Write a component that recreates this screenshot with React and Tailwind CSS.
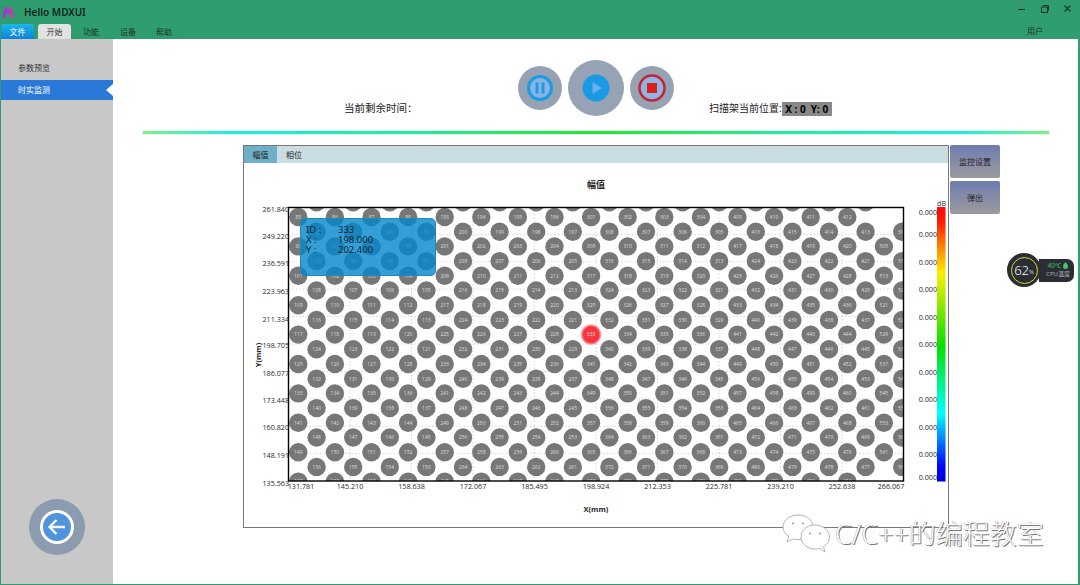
import React from "react";

const cjk = "font-['Noto_Sans','Noto_Sans_CJK_SC',sans-serif]";

function buildCircles() {
  const out = [];
  for (let k = -1; k <= 18; k++) {
    const odd = ((k % 2) + 2) % 2 === 1;
    const cy = 217 + 14.7 * k;
    const x0 = odd ? 316.6 : 298.3;
    const show = k <= 0 || k === 18 ? 16 : 17;
    for (let i = 0; i < show; i++) {
      const block = Math.floor(i / 4);
      const pos = i % 4;
      const starts = [101, 209, 317, 425];
      let n;
      if (block < 4) {
        const base = starts[block] + 4 * (k - 4);
        n = odd ? base + 3 - pos : base + pos;
      } else {
        const base = 505 + 4 * (k - 2);
        n = odd ? base + 3 : base;
      }
      const cx = x0 + 36.6 * i;
      out.push({ cx, cy, n });
    }
  }
  return out;
}

const yTicks = [
  ["261.840", 209], ["249.220", 236], ["236.591", 263.5], ["223.963", 291], ["211.334", 319],
  ["198.705", 345.5], ["186.077", 373], ["173.448", 400], ["160.820", 427], ["148.191", 455], ["135.563", 483],
];
const xTicks = [
  ["131.781", 301], ["145.210", 350], ["158.638", 411.5], ["172.067", 473], ["185.495", 534.5], ["198.924", 596],
  ["212.353", 657.5], ["225.781", 719], ["239.210", 780.5], ["252.638", 842], ["266.067", 891],
];
const cTicks = [212, 234, 262, 289, 317, 344, 372, 399, 427, 454, 477];

function Chart() {
  const circles = buildCircles();
  return (
    <svg width="704" height="364" viewBox="244 163 704 364" className="block" style={{ fontFamily: "'Open Sans','Noto Sans CJK SC',sans-serif" }}>
      <defs>
        <clipPath id="plot"><rect x="288.5" y="207" width="615" height="274" /></clipPath>
        <linearGradient id="cbar" x1="0" y1="0" x2="0" y2="1">
          <stop offset="0" stopColor="#ff0a0a" />
          <stop offset="0.05" stopColor="#ff1a00" />
          <stop offset="0.24" stopColor="#ffee00" />
          <stop offset="0.51" stopColor="#00e000" />
          <stop offset="0.75" stopColor="#00ffff" />
          <stop offset="0.95" stopColor="#0000ff" />
          <stop offset="1" stopColor="#0000c8" />
        </linearGradient>
        <radialGradient id="hot">
          <stop offset="0" stopColor="#f9404a" />
          <stop offset="0.72" stopColor="#f7303c" />
          <stop offset="1" stopColor="#f7303c" stopOpacity="0.25" />
        </radialGradient>
      </defs>
      <text x="596" y="188" textAnchor="middle" fontSize="9" fontWeight="700" fill="#222">幅值</text>
      <g clipPath="url(#plot)">
        {[234.4, 261.8, 289.2, 316.6, 344, 371.4, 398.8, 426.2, 453.6].map((y) => (
          <line key={y} x1="288.5" x2="903.5" y1={y} y2={y} stroke="#b8b8b8" strokeWidth="0.6" strokeDasharray="1.5 2" />
        ))}
        {[350, 411.5, 473, 534.5, 596, 657.5, 719, 780.5, 842].map((x) => (
          <line key={x} x1={x} x2={x} y1="207" y2="481" stroke="#b8b8b8" strokeWidth="0.6" strokeDasharray="1.5 2" />
        ))}
        {circles.map((c) => (
          <g key={c.cx + "-" + c.cy}>
            <circle cx={c.cx} cy={c.cy} r={c.n === 333 ? 10.5 : 9.2} fill={c.n === 333 ? "url(#hot)" : "#777777"} />
            <text x={c.cx} y={c.cy + 1.8} textAnchor="middle" fontSize="5" fill="#dddddd">{c.n}</text>
          </g>
        ))}
      </g>
      <rect x="288.5" y="207.5" width="615" height="273.5" fill="none" stroke="#000" strokeWidth="1.4" />
      {yTicks.map(([t, y]) => (
        <text key={t} x="289" y={y + 2.5} textAnchor="end" fontSize="7.2" fill="#2a2a2a">{t}</text>
      ))}
      {xTicks.map(([t, x]) => (
        <text key={t} x={x} y="489" textAnchor="middle" fontSize="7.2" fill="#2a2a2a">{t}</text>
      ))}
      <text x="596" y="512" textAnchor="middle" fontSize="7.5" fontWeight="700" fill="#222">X(mm)</text>
      <text transform="translate(260.5 355) rotate(-90)" textAnchor="middle" fontSize="7.5" fontWeight="700" fill="#222">Y(mm)</text>
      <rect x="937" y="207" width="8.5" height="274.5" fill="url(#cbar)" />
      <text x="941.5" y="205.5" textAnchor="middle" fontSize="7" fill="#2a2a2a">dB</text>
      {cTicks.map((y) => (
        <text key={y} x="937" y={y + 2.5} textAnchor="end" fontSize="7.2" fill="#2a2a2a">0.000</text>
      ))}
    </svg>
  );
}

function RoundBtn({ big, children }) {
  return (
    <div className={`${big ? "w-[56px] h-[56px]" : "w-[44px] h-[44px]"} rounded-full bg-[#96a3b5] flex items-center justify-center`}>
      {children}
    </div>
  );
}

function Wechat() {
  return (
    <svg width="50" height="42" viewBox="0 0 50 42" fill="#fff" stroke="#aaaaaa" strokeWidth="0.9">
      <path d="M16 2C7.5 2 1 7.5 1 14c0 4 2.4 7.3 5.8 9.5L5 29l6-3c1.7.4 3.2.6 5 .6 9 0 15-6 15-12.6C31 7.5 24.5 2 16 2z" />
      <path d="M33 12c-8 0-14 5.500-14 12s6 12 14 12c1.500 0 3-.2 4.500-.6L43 39l-1.500-5.500C45 31.500 47.500 28 47.500 24 47.500 17.500 41 12 33 12z" />
      <circle cx="11" cy="10.500" r="1" fill="#999" stroke="none" />
      <circle cx="21" cy="10.500" r="1" fill="#999" stroke="none" />
      <circle cx="28" cy="20.500" r="1" fill="#999" stroke="none" />
      <circle cx="38" cy="20.500" r="1" fill="#999" stroke="none" />
    </svg>
  );
}

export default function App() {
  return (
    <div className={`relative w-[1080px] h-[585px] flex flex-col overflow-hidden bg-[#2f9d70] px-[1px] pb-[1px] ${cjk}`}>
      {/* title bar */}
      <header className="h-[24px] flex items-center shrink-0">
        <svg width="12" height="14" viewBox="0 0 12 14" className="ml-[1px]">
          <path d="M1 13 L2 2 L4 2 L6 6 L8 2 L10 2 L11 13 L8.500 13 L8 7 L6 10 L4 7 L3.500 13 Z" fill="#a532d8" />
          <path d="M8 2 L10 2 L11 13 L8.500 13 Z" fill="#d835a8" />
        </svg>
        <span className="ml-[10px] text-[10px] font-semibold text-[#10251c]">Hello MDXUI</span>
        <div className="ml-auto mb-[6px] flex items-center gap-[13px] pr-[6px] text-[#14392b]">
          <svg width="10" height="10" viewBox="0 0 10 10"><path d="M1 5.500h7" stroke="currentColor" strokeWidth="1.100" /></svg>
          <svg width="10" height="10" viewBox="0 0 10 10" fill="none" stroke="currentColor" strokeWidth="1"><rect x="1.500" y="3" width="6" height="5.500" /><path d="M3.500 3V1.500h5v5H7.500" /></svg>
          <svg width="10" height="10" viewBox="0 0 10 10"><path d="M1.500 1.500l6 6M7.500 1.500l-6 6" stroke="currentColor" strokeWidth="1.200" /></svg>
        </div>
      </header>
      {/* menu bar */}
      <nav className="h-[15px] flex items-stretch text-[8px] leading-[15px] shrink-0 text-[#17352a]">
        <span className="w-[33px] text-center rounded-t-[3px] text-white bg-[linear-gradient(#1ab6ea,#0f80d8)]">文件</span>
        <span className="ml-[4px] w-[33px] text-center rounded-t-[3px] bg-[#e2e2e2] text-[#333]">开始</span>
        <span className="ml-[12px]">功能</span>
        <span className="ml-[21px]">设备</span>
        <span className="ml-[20px]">帮助</span>
        <span className="ml-auto mr-[36px] -mt-[1px]">用户</span>
      </nav>
      {/* body */}
      <div className="flex-1 flex min-h-0 bg-white mr-[1px]">
        <aside className="w-[112px] shrink-0 flex flex-col bg-[#c8c8c8] text-[8px]">
          <div className="mt-[19px] h-[20px] pl-[17px] leading-[20px] text-[#333]">参数预览</div>
          <div className="mt-[2px] h-[20px] pl-[17px] leading-[20px] text-white bg-[#2a78d8] relative">
            时实监测
            <span className="absolute right-0 top-[3.500px] w-0 h-0 border-y-[6.500px] border-y-transparent border-r-[7px] border-r-white" />
          </div>
          <div className="mt-auto mb-[29px] ml-[28px] w-[56px] h-[56px] rounded-full bg-[#8b9bb0] flex items-center justify-center">
            <svg width="36" height="36" viewBox="0 0 36 36">
              <circle cx="18" cy="18" r="15.500" fill="#4f94dc" stroke="#fff" strokeWidth="3" />
              <path d="M26 18H11M17.500 11L10.500 18l7 7" fill="none" stroke="#f2f6fb" strokeWidth="2.400" />
            </svg>
          </div>
        </aside>
        <main className="flex-1 min-w-0 flex flex-col">
          {/* control row */}
          <div className="h-[92px] shrink-0 flex items-start pl-[231px] text-[10px] text-[#222]">
            <span className="w-[174px] mt-[62px] text-[10.500px]">当前剩余时间：</span>
            <div className="mt-[21px] flex items-center gap-[6px]">
              <RoundBtn>
                <svg width="30" height="30" viewBox="0 0 30 30">
                  <circle cx="15" cy="15" r="11.500" fill="#85b4e5" stroke="#1d9ae0" strokeWidth="3" />
                  <rect x="10.500" y="9.500" width="3" height="11" fill="#1d9ae0" />
                  <rect x="16.500" y="9.500" width="3" height="11" fill="#1d9ae0" />
                </svg>
              </RoundBtn>
              <RoundBtn big>
                <svg width="28" height="28" viewBox="0 0 28 28">
                  <circle cx="14" cy="14" r="13.500" fill="#1b9ae4" />
                  <path d="M10.500 8L20 14l-9.500 6Z" fill="#6bb1ee" />
                </svg>
              </RoundBtn>
              <RoundBtn>
                <svg width="30" height="30" viewBox="0 0 30 30">
                  <circle cx="15" cy="15" r="12.500" fill="#8fb5e8" stroke="#c82323" strokeWidth="2.500" />
                  <rect x="10" y="10" width="10" height="10" fill="#dd1c1c" />
                </svg>
              </RoundBtn>
            </div>
            <span className="ml-[35px] mt-[62px] whitespace-nowrap flex items-center">
              扫描架当前位置:
              <span className="h-[14px] w-[50px] bg-[#888] text-black font-bold leading-[14px] text-center whitespace-pre">X : 0  Y: 0</span>
            </span>
          </div>
          {/* gradient line */}
          <div className="ml-[30px] w-[906px] h-[3px] shrink-0 shadow-[0_0_2px_#7ff5c0] bg-[linear-gradient(90deg,#8ee88e,#25e8e0_10%,#2ee6a0_30%,#30e030_50%,#2ee6a0_70%,#25e8e0_90%,#8ee88e)]" />
          {/* chart row */}
          <div className="mt-[11px] ml-[130px] flex items-start gap-[1px]">
            <section className="relative w-[706px] h-[383px] border border-[#777] flex flex-col">
              <div className="h-[17px] flex bg-[#c9dde3] text-[8px] leading-[17px] text-[#222] shrink-0">
                <span className="w-[33px] text-center bg-[#6fb0c8]">幅值</span>
                <span className="ml-[9px]">相位</span>
              </div>
              <Chart />
              <div className="absolute left-[56px] top-[72px] w-[136px] h-[58px] rounded-[5px] bg-[#0087cc]/80 border border-[#2a86b4] text-[9.500px] leading-[10px] text-[#123] pl-[5px] pt-[6px]">
                <div className="flex"><span className="w-[32px]">ID :</span><span>333</span></div>
                <div className="flex"><span className="w-[32px]">X :</span><span>198.000</span></div>
                <div className="flex"><span className="w-[32px]">Y :</span><span>202.400</span></div>
              </div>
            </section>
            <div className="flex flex-col gap-[3px] text-[8px] text-[#222]">
              <button className="w-[50px] h-[33px] rounded-[2px] bg-[linear-gradient(#6f7cb2,#9b9b9b)]">监控设置</button>
              <button className="w-[50px] h-[33px] rounded-[2px] bg-[linear-gradient(#6f7cb2,#9b9b9b)]">弹出</button>
            </div>
          </div>
        </main>
      </div>

      {/* floating CPU widget */}
      <div className="absolute left-[1007px] top-[253px] flex items-center">
        <div className="z-10 w-[34px] h-[34px] rounded-full bg-[#2a2d33] flex items-center justify-center">
          <div className="w-[27px] h-[27px] rounded-full border-[1.500px] border-[#d8d832] flex items-center justify-center text-white text-[13px] font-light leading-none">
            62<span className="text-[6px] mt-[3px]">%</span>
          </div>
        </div>
        <div className="-ml-[2px] w-[35px] h-[23px] pl-[3px] rounded-r-[7px] bg-[#2a2d33] flex flex-col items-center justify-center leading-[9px]">
          <span className="text-[6.500px] text-[#3fc76a] flex items-center gap-[2px]">
            40℃
            <svg width="5" height="7" viewBox="0 0 5 7"><path d="M2.500 0C4 1.500 5 3 5 4.500A2.500 2.500 0 0 1 0 4.500C0 3 1 1.500 2.500 0Z" fill="#3fc76a" /></svg>
          </span>
          <span className="text-[6px] text-[#aab] whitespace-nowrap">CPU温度</span>
        </div>
      </div>

      {/* watermark */}
      <div className="absolute left-[782px] top-[513px] flex items-center pointer-events-none">
        <Wechat />
        <span className="ml-[3px] text-[27px] leading-[30px] font-light whitespace-nowrap text-white [text-shadow:1px_1px_0_#777,-0.5px_-0.5px_0_#aaa]">C/C++的编程教室</span>
      </div>
    </div>
  );
}
